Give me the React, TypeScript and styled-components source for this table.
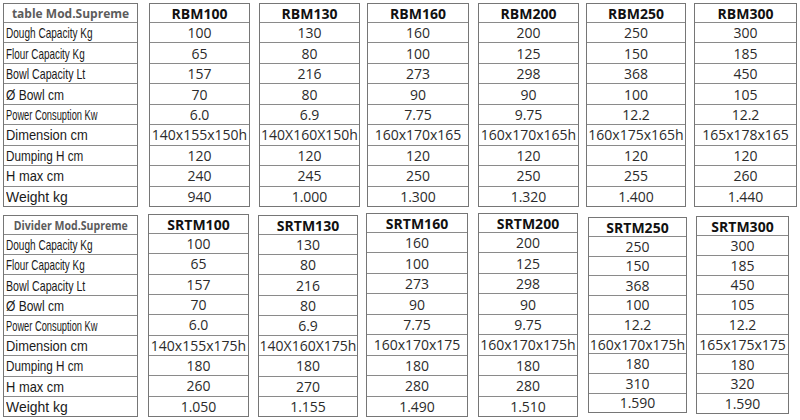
import React from 'react'
import styled, {createGlobalStyle} from 'styled-components'

const GlobalStyle = createGlobalStyle`
  body {
    margin: 0;
    background: #ffffff;
  }
`

const Page = styled.div`
  width: 800px;
  height: 420px;
  box-sizing: border-box;
  padding: 3px 0 0 3px;
  display: flex;
  flex-direction: column;
  background: #ffffff;
  overflow: hidden;
`

const TableRow = styled.div<{$mt: number}>`
  display: flex;
  align-items: flex-start;
  margin-top: ${p => p.$mt}px;
`

const Column = styled.div<{$w: number; $h: number; $ml: number; $mt: number}>`
  width: ${p => p.$w}px;
  height: ${p => p.$h}px;
  margin-left: ${p => p.$ml}px;
  margin-top: ${p => p.$mt}px;
  box-sizing: border-box;
  border: 1px solid #767676;
  display: flex;
  flex-direction: column;
`

const HeadCell = styled.div`
  height: 18px;
  flex: none;
  display: flex;
  align-items: center;
  justify-content: center;
  font-family: "Open Sans", "Liberation Sans", sans-serif;
  font-weight: 700;
  font-size: 14px;
  color: #111111;
  white-space: nowrap;
  overflow: hidden;
`

const TitleText = styled.span<{$sx: number}>`
  display: inline-block;
  font-size: 12px;
  color: #5c5c5c;
  transform: scaleX(${p => p.$sx});
`

const Cell = styled.div`
  flex: 1;
  border-top: 1px solid #8a8a8a;
  display: flex;
  align-items: center;
  justify-content: center;
  font-family: "Open Sans", "Liberation Sans", sans-serif;
  font-size: 14px;
  color: #2b2b2b;
  white-space: nowrap;
  overflow: hidden;
`

const LabelCell = styled(Cell)`
  justify-content: flex-start;
  padding-left: 2px;
  color: #1a1a1a;
`

// condensed label text, squeezed per row like the original sheet
const LabelText = styled.span<{$sx: number}>`
  display: inline-block;
  font-family: "Liberation Sans", Arial, sans-serif;
  font-size: 15px;
  transform: scaleX(${p => p.$sx});
  transform-origin: left center;
`

const labels: [string, number][] = [
    ['Dough Capacity Kg', 0.67],
    ['Flour Capacity Kg', 0.66],
    ['Bowl Capacity Lt', 0.71],
    ['Ø Bowl cm', 0.8],
    ['Power Consuption Kw', 0.62],
    ['Dimension cm', 0.86],
    ['Dumping H cm', 0.78],
    ['H max cm', 0.86],
    ['Weight kg', 0.93],
]

type Model = {name: string; x: number; w: number; top: number; h: number; values: string[]}

type Table = {
    title: string
    titleScale: number
    top: number
    label: {x: number; w: number; top: number; h: number}
    models: Model[]
}

const tables: Table[] = [
    {
        title: 'table Mod.Supreme',
        titleScale: 1,
        top: 0,
        label: {x: 3, w: 135, top: 0, h: 204},
        models: [
            {name: 'RBM100', x: 149, w: 101, top: 0, h: 204, values: ['100', '65', '157', '70', '6.0', '140x155x150h', '120', '240', '940']},
            {name: 'RBM130', x: 259, w: 101, top: 0, h: 204, values: ['130', '80', '216', '80', '6.9', '140X160X150h', '120', '245', '1.000']},
            {name: 'RBM160', x: 367, w: 102, top: 0, h: 204, values: ['160', '100', '273', '90', '7.75', '160x170x165', '120', '250', '1.300']},
            {name: 'RBM200', x: 478, w: 101, top: 0, h: 204, values: ['200', '125', '298', '90', '9.75', '160x170x165h', '120', '250', '1.320']},
            {name: 'RBM250', x: 586, w: 100, top: 0, h: 204, values: ['250', '150', '368', '100', '12.2', '160x175x165h', '120', '255', '1.400']},
            {name: 'RBM300', x: 694, w: 103, top: 0, h: 204, values: ['300', '185', '450', '105', '12.2', '165x178x165', '120', '260', '1.440']},
        ],
    },
    {
        title: 'Divider Mod.Supreme',
        titleScale: 0.88,
        top: 6,
        label: {x: 3, w: 135, top: 2, h: 202},
        models: [
            {name: 'SRTM100', x: 148, w: 101, top: 1, h: 203, values: ['100', '65', '157', '70', '6.0', '140x155x175h', '180', '260', '1.050']},
            {name: 'SRTM130', x: 258, w: 100, top: 2, h: 202, values: ['130', '80', '216', '80', '6.9', '140X160X175h', '180', '270', '1.155']},
            {name: 'SRTM160', x: 366, w: 102, top: 0, h: 204, values: ['160', '100', '273', '90', '7.75', '160x170x175', '180', '280', '1.490']},
            {name: 'SRTM200', x: 478, w: 100, top: 0, h: 204, values: ['200', '125', '298', '90', '9.75', '160x170x175h', '180', '280', '1.510']},
            {name: 'SRTM250', x: 588, w: 99, top: 4, h: 196, values: ['250', '150', '368', '100', '12.2', '160x170x175h', '180', '310', '1.590']},
            {name: 'SRTM300', x: 696, w: 93, top: 3, h: 198, values: ['300', '185', '450', '105', '12.2', '165x175x175', '180', '320', '1.590']},
        ],
    },
]

const SpecTable: React.FC<{table: Table}> = ({table}) => {
    let right = table.label.x + table.label.w
    return (
        <TableRow $mt={table.top}>
            <Column $w={table.label.w} $h={table.label.h} $ml={0} $mt={table.label.top}>
                <HeadCell>
                    <TitleText $sx={table.titleScale}>{table.title}</TitleText>
                </HeadCell>
                {labels.map(([text, sx]) => (
                    <LabelCell key={text}>
                        <LabelText $sx={sx}>{text}</LabelText>
                    </LabelCell>
                ))}
            </Column>
            {table.models.map(m => {
                const ml = m.x - right
                right = m.x + m.w
                return (
                    <Column key={m.name} $w={m.w} $h={m.h} $ml={ml} $mt={m.top}>
                        <HeadCell>{m.name}</HeadCell>
                        {m.values.map((v, i) => (
                            <Cell key={i}>{v}</Cell>
                        ))}
                    </Column>
                )
            })}
        </TableRow>
    )
}

const App: React.FC = () => {
    return (
        <>
            <GlobalStyle/>
            <Page>
                {tables.map(t => (
                    <SpecTable key={t.title} table={t}/>
                ))}
            </Page>
        </>
    )
}

export default App
